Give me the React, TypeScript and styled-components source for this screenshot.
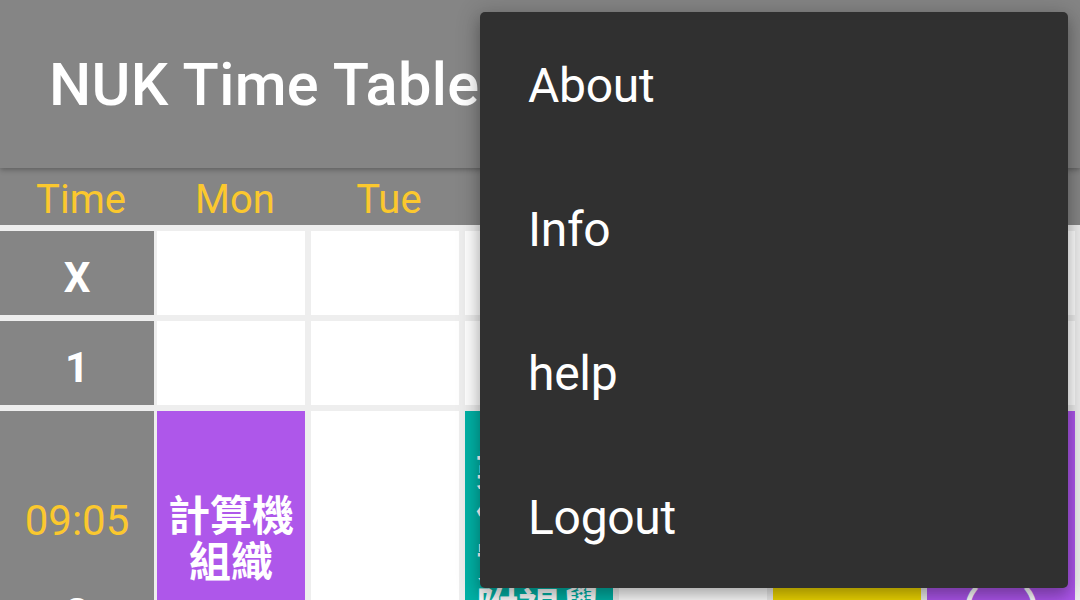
import React from "react";
import styled, { createGlobalStyle } from "styled-components";

const GlobalStyle = createGlobalStyle`
  html, body {
    margin: 0;
    padding: 0;
    background: #eeeeee;
  }
  body {
    font-family: Roboto, "Noto Sans", "Noto Sans CJK TC", sans-serif;
  }
`;

const Page = styled.div`
  position: relative;
  width: 1080px;
  height: 600px;
  overflow: hidden;
  background: #eeeeee;
`;

const AppBar = styled.header`
  position: relative;
  z-index: 2;
  height: 168px;
  display: flex;
  align-items: center;
  padding-left: 49px;
  background: #858585;
  box-shadow: 0 2px 5px rgba(0, 0, 0, 0.28);
`;

const Title = styled.h1`
  margin: 0;
  padding-top: 2px;
  color: #ffffff;
  font-family: Roboto, sans-serif;
  font-weight: 500;
  font-size: 59.5px;
  letter-spacing: 0.35px;
`;

const DayHeader = styled.div`
  display: flex;
  height: 57px;
  padding-left: 4px;
  background: #858585;
`;

const DayLabel = styled.div`
  flex: 0 0 154px;
  text-align: center;
  line-height: 57px;
  padding-top: 3px;
  color: #fbc82e;
  font-family: Roboto, sans-serif;
  font-size: 40px;
`;

const Grid = styled.div`
  display: flex;
  flex-direction: column;
  gap: 6px;
  padding-top: 6px;
  background: #eeeeee;
`;

const Row = styled.div<{ $h: number }>`
  display: flex;
  height: ${(p) => p.$h}px;
  flex: 0 0 auto;
`;

const TimeCell = styled.div<{ $top?: boolean }>`
  flex: 0 0 154px;
  margin-right: 3px;
  background: #858585;
  display: flex;
  flex-direction: column;
  align-items: center;
  justify-content: ${(p) => (p.$top ? "flex-start" : "center")};
  padding-top: ${(p) => (p.$top ? "86px" : "0")};
  box-sizing: border-box;
  gap: 36px;
`;

const Period = styled.div`
  color: #ffffff;
  font-family: Roboto, sans-serif;
  font-weight: 700;
  font-size: 42px;
  line-height: 48px;
  padding-top: 9px;
`;

const ClockText = styled.div`
  color: #fbc82e;
  font-family: Roboto, sans-serif;
  font-size: 42px;
  line-height: 48px;
`;

const ClassCell = styled.div<{ $bg?: string }>`
  flex: 0 0 148px;
  margin-right: 6px;
  background: ${(p) => p.$bg ?? "#ffffff"};
  display: flex;
  align-items: center;
  justify-content: center;
  text-align: center;
  color: #ffffff;
  font-family: "Noto Sans CJK TC", "Noto Sans CJK SC", sans-serif;
  font-weight: 700;
  font-size: 42px;
  line-height: 46px;
  white-space: pre-line;
`;

const Menu = styled.div`
  position: absolute;
  z-index: 5;
  top: 12px;
  left: 480px;
  width: 588px;
  display: flex;
  flex-direction: column;
  background: #303030;
  border-radius: 5px;
  box-shadow: 0 8px 14px rgba(0, 0, 0, 0.22), 0 2px 22px 4px rgba(0, 0, 0, 0.16);
`;

const MenuItem = styled.div`
  height: 144px;
  display: flex;
  align-items: center;
  padding-left: 48px;
  padding-top: 2px;
  box-sizing: border-box;
  color: #ffffff;
  font-family: Roboto, sans-serif;
  font-size: 48px;
  letter-spacing: -0.3px;
`;

const days = ["Time", "Mon", "Tue", "Wed", "Thu", "Fri", "Sat"];

type Cls = { text?: string; bg?: string };

const emptyRow: Cls[] = [{}, {}, {}, {}, {}, {}];

const period2: Cls[] = [
  { text: "計算機\n組織", bg: "#ae57ea" },
  {},
  { text: "數位影\n像處理\n實務與\n附視覺", bg: "#00b2a6" },
  {},
  { text: "網路\n程式", bg: "#f0d800" },
  { text: "進階\n英文\n寫作\n（一）", bg: "#ad56ec" },
];

export default function App() {
  return (
    <>
      <GlobalStyle />
      <Page>
        <AppBar>
          <Title>NUK Time Table</Title>
        </AppBar>
        <DayHeader>
          {days.map((d) => (
            <DayLabel key={d}>{d}</DayLabel>
          ))}
        </DayHeader>
        <Grid>
          <Row $h={84}>
            <TimeCell>
              <Period>X</Period>
            </TimeCell>
            {emptyRow.map((c, i) => (
              <ClassCell key={i} $bg={c.bg}>
                {c.text}
              </ClassCell>
            ))}
          </Row>
          <Row $h={84}>
            <TimeCell>
              <Period>1</Period>
            </TimeCell>
            {emptyRow.map((c, i) => (
              <ClassCell key={i} $bg={c.bg}>
                {c.text}
              </ClassCell>
            ))}
          </Row>
          <Row $h={250}>
            <TimeCell $top>
              <ClockText>09:05</ClockText>
              <Period>2</Period>
              <ClockText>09:55</ClockText>
            </TimeCell>
            {period2.map((c, i) => (
              <ClassCell key={i} $bg={c.bg}>
                {c.text}
              </ClassCell>
            ))}
          </Row>
        </Grid>
        <Menu>
          <MenuItem>About</MenuItem>
          <MenuItem>Info</MenuItem>
          <MenuItem>help</MenuItem>
          <MenuItem>Logout</MenuItem>
        </Menu>
      </Page>
    </>
  );
}
